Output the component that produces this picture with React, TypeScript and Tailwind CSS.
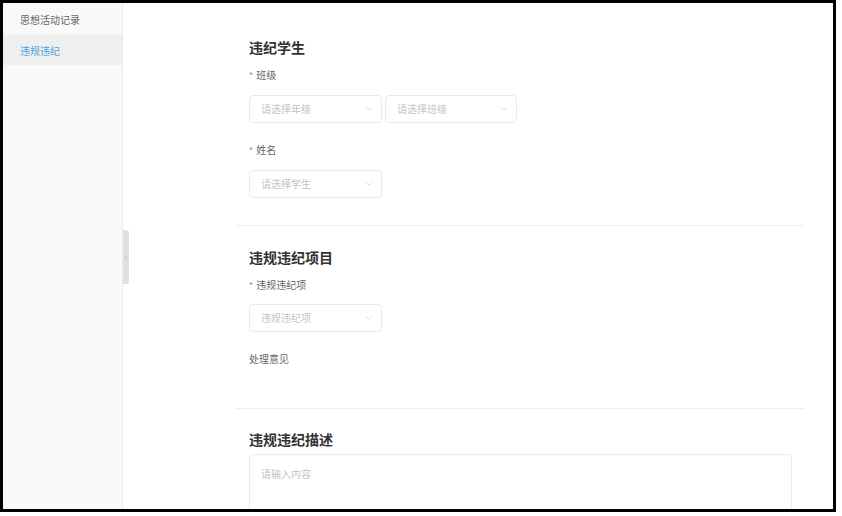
import { ChevronDown, ChevronLeft } from 'lucide-react';

const font = { fontFamily: '"Noto Sans CJK SC", "Noto Sans", sans-serif' };

function Select({ placeholder, width = 'w-[133px]' }: { placeholder: string; width?: string }) {
  return (
    <div className={`${width} h-[28px] border border-[#e8eaef] rounded-[4px] flex items-center justify-between pl-[11px] pr-[7px] bg-white`}>
      <span className="text-[10px] text-[#c0c4cc] leading-none">{placeholder}</span>
      <ChevronDown size={10} strokeWidth={1.5} className="text-[#c0c4cc]" />
    </div>
  );
}

function Label({ text, required = false }: { text: string; required?: boolean }) {
  return (
    <div className="flex items-center h-[16px] text-[10px] text-[#666] leading-none">
      {required && <span className="text-[#f56c6c] mr-[3px] text-[9px]">*</span>}
      {text}
    </div>
  );
}

export default function App() {
  return (
    <div style={font} className="w-[836px] h-[512px] border-[3px] border-black flex overflow-hidden bg-white">
      {/* 侧边栏 */}
      <div className="w-[120px] shrink-0 bg-[#f9f9f9] border-r border-[#ececec] relative">
        <div className="h-[32px] flex items-center pl-[17px] pt-[1px] text-[10px] text-[#666]">思想活动记录</div>
        <div className="h-[30px] flex items-center pl-[17px] bg-[#efefef] text-[10px] text-[#4aa3df]">违规违纪</div>
        <div className="absolute right-[-7px] top-[227px] w-[6px] h-[54px] bg-[#e0e0e0] rounded-r-[3px] flex items-center justify-center">
          <ChevronLeft size={6} strokeWidth={2} className="text-[#999]" />
        </div>
      </div>

      {/* 主体 */}
      <div className="flex-1 pl-[112px] pr-[28px]">
        <div className="pl-[14px] pt-[34px] pb-[27px] border-b border-[#efefef]">
          <h2 className="text-[14px] leading-[20px] font-bold text-[#303133]">违纪学生</h2>
          <div className="mt-[10px]"><Label text="班级" required /></div>
          <div className="mt-[12px] flex gap-[3px]">
            <Select placeholder="请选择年级" />
            <Select placeholder="请选择班级" width="w-[132px]" />
          </div>
          <div className="mt-[19px]"><Label text="姓名" required /></div>
          <div className="mt-[12px]"><Select placeholder="请选择学生" /></div>
        </div>

        <div className="pl-[14px] pt-[21px] pb-[41px] border-b border-[#efefef]">
          <h2 className="text-[14px] leading-[20px] font-bold text-[#303133]">违规违纪项目</h2>
          <div className="mt-[10px]"><Label text="违规违纪项" required /></div>
          <div className="mt-[11px]"><Select placeholder="违规违纪项" /></div>
          <div className="mt-[19px]"><Label text="处理意见" /></div>
        </div>

        <div className="pl-[14px] pt-[20px]">
          <h2 className="text-[14px] leading-[20px] font-bold text-[#303133]">违规违纪描述</h2>
          <div className="mt-[5px] w-[543px] h-[90px] border border-[#e8eaef] rounded-[4px] px-[11px] pt-[4px]">
            <span className="text-[10px] text-[#c0c4cc]">请输入内容</span>
          </div>
        </div>
      </div>
    </div>
  );
}
